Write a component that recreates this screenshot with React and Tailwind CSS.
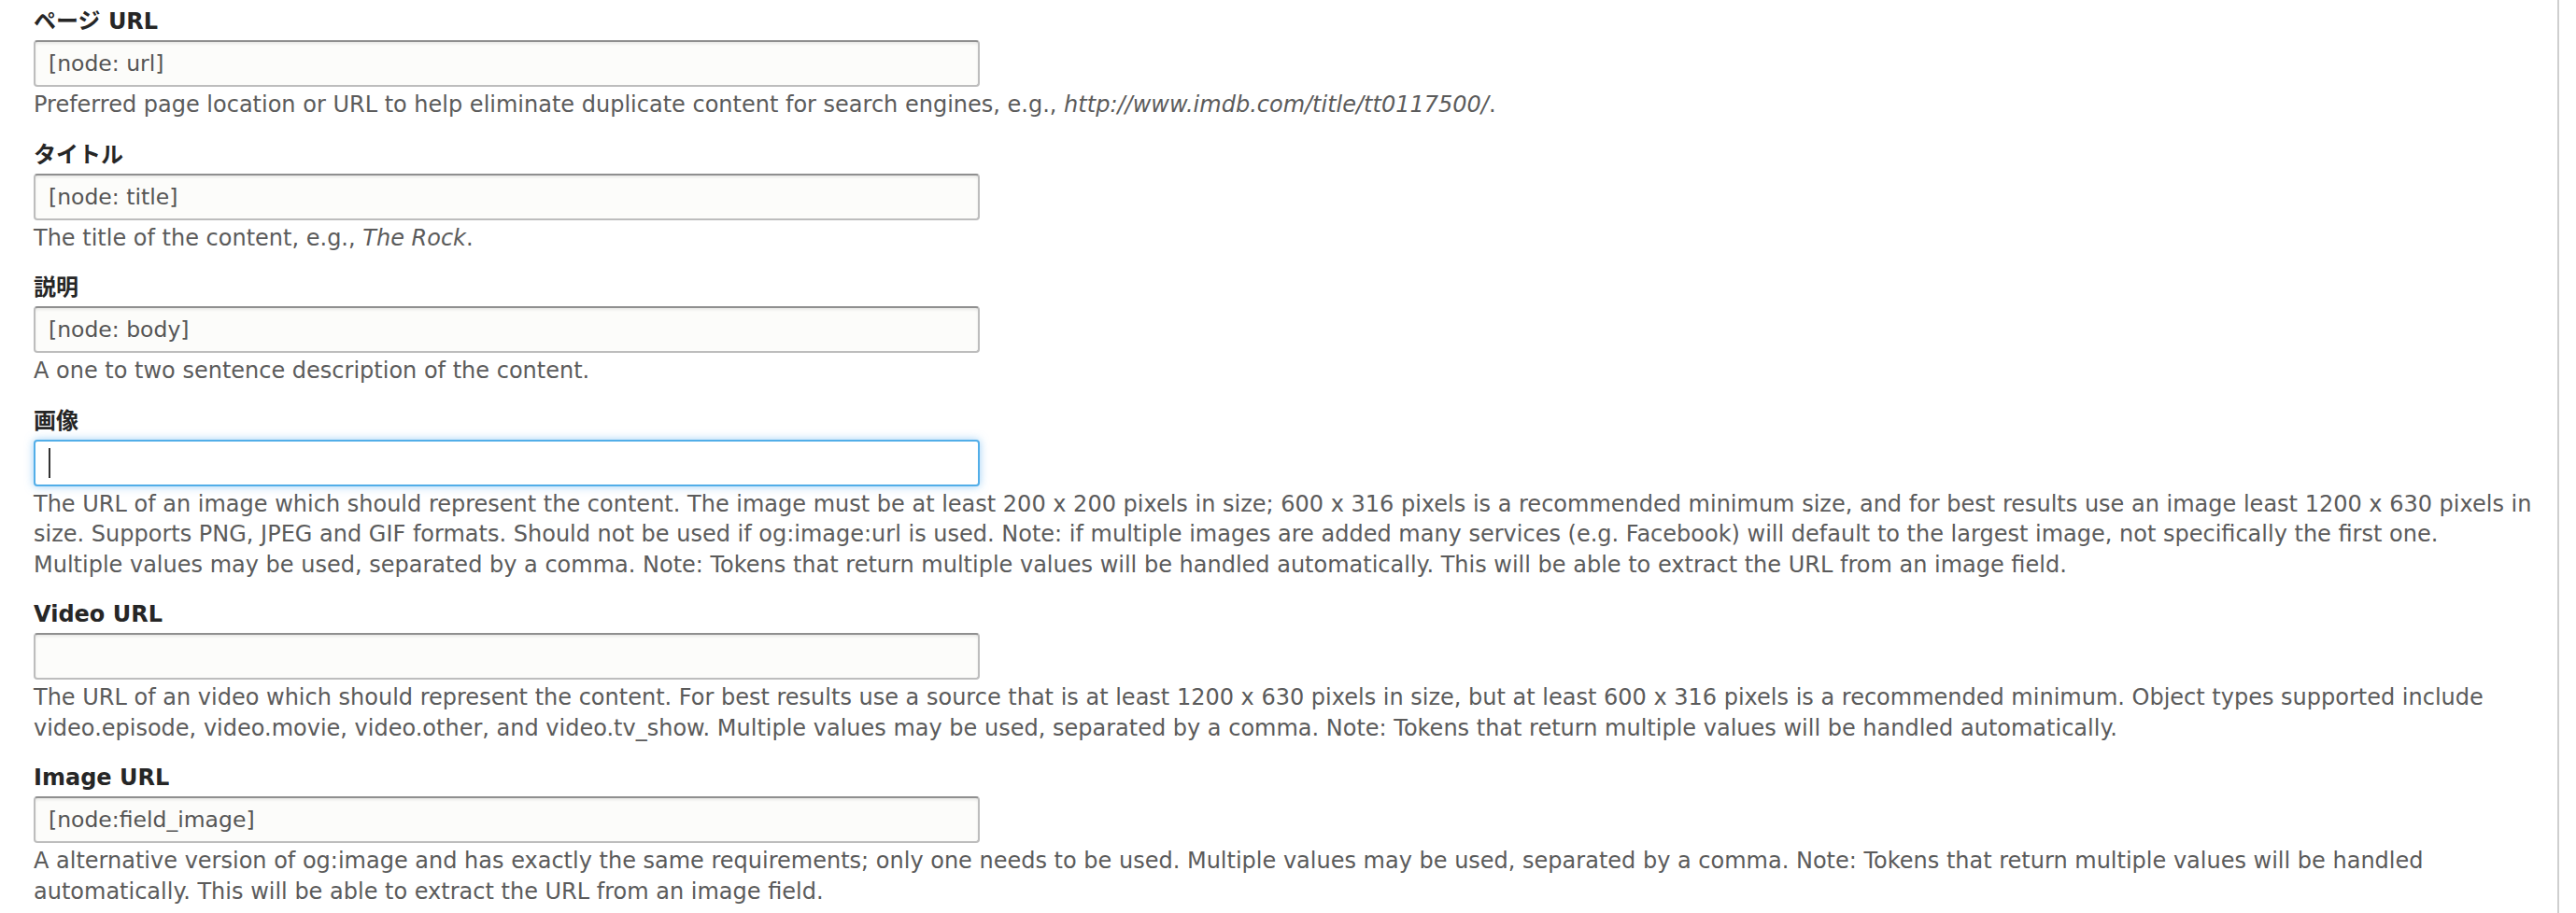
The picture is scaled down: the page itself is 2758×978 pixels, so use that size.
import React from 'react'

const FONT = { fontFamily: '"DejaVu Sans", "Noto Sans CJK JP", sans-serif' }

const fields = [
  {
    label: 'ページ URL',
    value: '[node: url]',
    description: (
      <>
        Preferred page location or URL to help eliminate duplicate content for search engines, e.g.,{' '}
        <em>http://www.imdb.com/title/tt0117500/</em>.
      </>
    ),
  },
  {
    label: 'タイトル',
    value: '[node: title]',
    description: (
      <>
        The title of the content, e.g., <em>The Rock</em>.
      </>
    ),
  },
  {
    label: '説明',
    value: '[node: body]',
    description: 'A one to two sentence description of the content.',
  },
  {
    label: '画像',
    value: '',
    focused: true,
    description: (
      <>
        The URL of an image which should represent the content. The image must be at least 200 x 200 pixels in size; 600 x 316 pixels is a recommended minimum size, and for best results use an image least 1200 x 630 pixels in size. Supports PNG, JPEG and GIF formats. Should not be used if og:image:url is used. Note: if multiple images are added many services (e.g. Facebook) will default to the largest image, not specifically the first one.
        <br />
        Multiple values may be used, separated by a comma. Note: Tokens that return multiple values will be handled automatically. This will be able to extract the URL from an image field.
      </>
    ),
  },
  {
    label: 'Video URL',
    value: '',
    description:
      'The URL of an video which should represent the content. For best results use a source that is at least 1200 x 630 pixels in size, but at least 600 x 316 pixels is a recommended minimum. Object types supported include video.episode, video.movie, video.other, and video.tv_show. Multiple values may be used, separated by a comma. Note: Tokens that return multiple values will be handled automatically.',
  },
  {
    label: 'Image URL',
    value: '[node:field_image]',
    description:
      'A alternative version of og:image and has exactly the same requirements; only one needs to be used. Multiple values may be used, separated by a comma. Note: Tokens that return multiple values will be handled automatically. This will be able to extract the URL from an image field.',
  },
]

function TextField({ field }) {
  return (
    <div className="mb-[21px]">
      <label className="block text-[24px] leading-[32px] font-bold text-[#262626]">
        {field.label}
      </label>
      {field.focused ? (
        <div className="mt-[4px] flex h-[50px] w-[1013px] items-center rounded-[4px] border-2 border-[#52aee8] bg-white pl-[14px] shadow-[0_0_10px_rgba(80,170,240,0.55)]">
          <span className="block h-[32px] w-[2px] bg-[#333]" />
        </div>
      ) : (
        <input
          type="text"
          readOnly
          value={field.value}
          className="mt-[4px] block h-[50px] w-[1013px] rounded-[4px] border-2 border-[#bdbdbd] border-t-[#8f8f8f] bg-[#fcfcfa] pl-[14px] text-[23.5px] text-[#555] shadow-[inset_0_2px_3px_rgba(0,0,0,0.08)] outline-none"
          style={FONT}
        />
      )}
      <div className="mt-[3px] text-[24px] leading-[32.5px] text-[#5b5b5b]">
        {field.description}
      </div>
    </div>
  )
}

export default function App() {
  return (
    <div className="flex min-h-[978px] bg-white" style={FONT}>
      <div className="w-[2740px] border-r-2 border-[#cfcfcf] pt-[7px] pl-[36px] pr-[20px]">
        {fields.map((f) => (
          <TextField key={f.label} field={f} />
        ))}
      </div>
    </div>
  )
}
